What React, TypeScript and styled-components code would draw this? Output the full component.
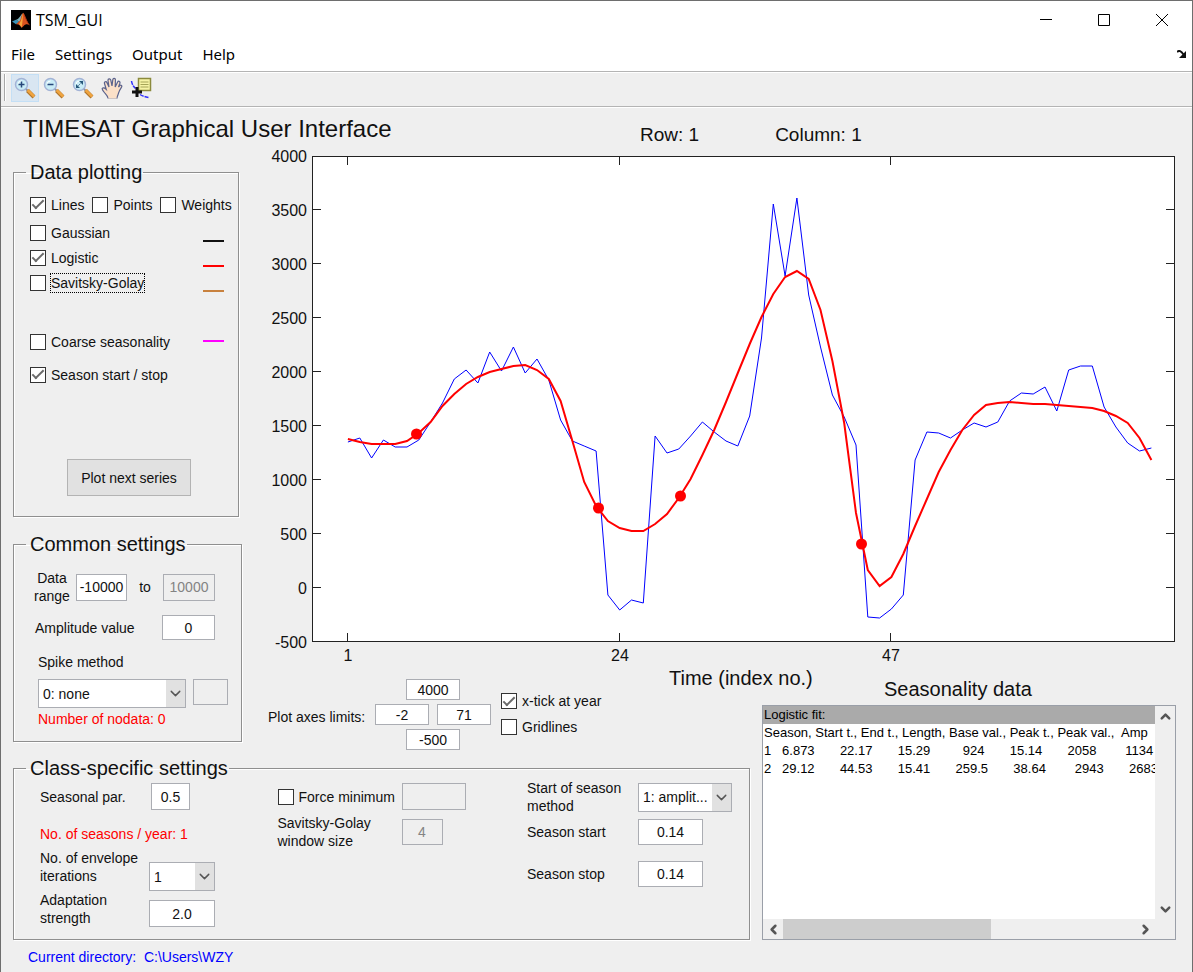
import React, { useId } from "react";
import styled, { createGlobalStyle, css } from "styled-components";
import { ChevronDown, ChevronLeft, ChevronRight, ChevronUp } from "lucide-react";

const GlobalStyle = createGlobalStyle`
  *, *::before, *::after { box-sizing: border-box; }
  body {
    margin: 0;
    background: #efefef;
    color: #111;
    font: 14px/18px "Liberation Sans", Arial, sans-serif;
  }
  button, input, select { font: inherit; color: inherit; margin: 0; }
`;

/* ---------- window chrome ---------- */

const Window = styled.div`
  min-height: 100vh;
  min-width: 1080px;
  display: flex;
  flex-direction: column;
  background: #efefef;
  border: 1px solid #6e6e6e;
  border-bottom: 0;
`;

const TitleBar = styled.header`
  display: flex;
  align-items: center;
  height: 37px;
  padding: 0 1px 0 10px;
  background: #fff;
  color: #000;
  font: 16px/20px "Open Sans", "Noto Sans", sans-serif;
`;

const Caption = styled.span`
  flex: 1;
  padding-left: 5px;
`;

const WindowButton = styled.button`
  width: 58px;
  height: 37px;
  display: grid;
  place-items: center;
  padding: 0;
  border: 0;
  background: none;
`;

const MenuBar = styled.nav`
  display: flex;
  align-items: center;
  gap: 20px;
  height: 33px;
  padding: 0 6px 2px 10px;
  background: #fff;
  color: #000;
  font: 15px/20px "Noto Sans", "Open Sans", sans-serif;
`;

const MenuItem = styled.button`
  padding: 0;
  border: 0;
  background: none;
`;

const DockButton = styled(MenuItem)`
  display: grid;
  margin-left: auto;
`;

const ToolBar = styled.div`
  display: flex;
  align-items: center;
  gap: 1px;
  height: 36px;
  padding: 0 3px 3px;
  border-top: 1px solid #b4b4b4;
  border-bottom: 1px solid #b4b4b4;
  box-shadow: inset 0 1px 0 #fff, 0 1px 0 #fff;
`;

const Grip = styled.span`
  width: 2px;
  height: 27px;
  margin-right: 4px;
  border-left: 1px solid #a8a8a8;
  border-right: 1px solid #fff;
`;

const ToolButton = styled.button<{ $active?: boolean }>`
  display: grid;
  place-items: center;
  width: 28px;
  height: 28px;
  padding: 0;
  border: 1px solid ${(p) => (p.$active ? "#c4dff5" : "transparent")};
  background: ${(p) => (p.$active ? "#d9e6f2" : "none")};
`;

/* ---------- page grid ---------- */

const Heading = styled.div`
  display: flex;
  gap: 76px;
  height: 39px;
  padding: 8px 22px 0;
`;

const MainTitle = styled.h1`
  width: 541px;
  margin: 0;
  font-size: 24px;
  font-weight: 400;
  line-height: 28px;
`;

const Position = styled.p`
  margin: 0;
  font-size: 19px;
  line-height: 40px;
`;

const Workspace = styled.main`
  display: grid;
  grid-template-columns: 249px minmax(400px, 1fr) 100px 414px;
  grid-template-rows: auto 38px auto auto;
  grid-template-areas:
    "side chart chart chart"
    "side limits titles titles"
    "side limits . list"
    "class class class list";
  padding: 0 16px 0 12px;
`;

const Side = styled.div`
  grid-area: side;
  display: flex;
  flex-direction: column;
  align-items: flex-start;
  gap: 15px;
  padding: 14px 0;
`;

const Group = styled.fieldset`
  min-width: 0;
  margin: 0;
  padding: 0 12px 0 16px;
  border: 1px solid #8f8f8f;
  box-shadow: 1px 1px 0 #fff, inset 1px 1px 0 #fff;
`;

const PlottingGroup = styled(Group)`
  width: 226px;
  padding-bottom: 20px;
`;

const CommonGroup = styled(Group)`
  width: 229px;
  padding: 13px 12px 13px 20px;
`;

const ClassGroup = styled(Group)`
  grid-area: class;
  width: 737px;
  padding: 0 16px 12px 26px;
`;

const GroupTitle = styled.legend`
  margin-left: -4px;
  padding: 0 1px 0 4px;
  font-size: 20px;
  line-height: 24px;
`;

const ClassTitle = styled(GroupTitle)`
  margin-left: -14px;
`;

const CommonTitle = styled(GroupTitle)`
  margin-left: -8px;
`;

/* ---------- controls ---------- */

const CheckLabel = styled.label`
  display: inline-flex;
  align-items: center;
  gap: 5px;
  white-space: nowrap;
`;

const Box = styled.input`
  appearance: none;
  display: grid;
  place-items: center;
  width: 16px;
  height: 16px;
  border: 1px solid #333;
  background: #fff;
  &:checked::after {
    content: "";
    width: 12px;
    height: 6px;
    margin-bottom: 3px;
    border-left: 2px solid #6a6a6a;
    border-bottom: 2px solid #6a6a6a;
    transform: rotate(-45deg);
  }
`;

const CheckText = styled.span<{ $focused?: boolean }>`
  ${(p) => p.$focused && css`outline: 1px dotted #000;`}
`;

const Field = styled.input<{ $w: number; $h: number }>`
  width: ${(p) => p.$w}px;
  height: ${(p) => p.$h}px;
  padding: 0;
  border: 1px solid #abadb3;
  background: #fff;
  text-align: center;
  &:disabled {
    background: #efefef;
    color: #838383;
  }
`;

const SelectFrame = styled.span<{ $w: number }>`
  position: relative;
  display: inline-block;
  width: ${(p) => p.$w}px;
  height: 29px;
`;

const SelectBox = styled.select`
  appearance: none;
  width: 100%;
  height: 100%;
  padding: 0 20px 0 4px;
  border: 1px solid #abadb3;
  border-radius: 0;
  background: #fff;
`;

const SelectArrow = styled.span`
  position: absolute;
  top: 1px;
  right: 1px;
  bottom: 1px;
  display: grid;
  place-items: center;
  width: 19px;
  background: #e1e1e1;
  color: #555;
  pointer-events: none;
`;

const PushButton = styled.button`
  display: block;
  width: 124px;
  height: 37px;
  margin: 72px 0 0 37px;
  padding: 0;
  border: 1px solid #b3b3b3;
  background: #e1e1e1;
`;

const Note = styled.p<{ $color: string }>`
  margin: 0;
  color: ${(p) => p.$color};
`;

/* ---------- data plotting ---------- */

const StyleRow = styled.div`
  display: flex;
  gap: 8px;
  height: 25px;
  margin: 8px -4px 3px 0;
`;

const SeriesRow = styled.div<{ $space?: number }>`
  display: flex;
  justify-content: space-between;
  height: 25px;
  margin-top: ${(p) => p.$space ?? 0}px;
  padding-right: 2px;
  ${CheckLabel} { height: 25px; }
`;

const Swatch = styled.span<{ $color: string; $low?: boolean }>`
  width: 21px;
  height: 2px;
  margin-top: ${(p) => (p.$low ? 20 : 11)}px;
  background: ${(p) => p.$color};
`;

/* ---------- common settings ---------- */

const RangeRow = styled.div`
  display: grid;
  grid-template-columns: 36px 57px 1fr 52px;
  align-items: center;
  justify-items: end;
  padding-right: 14px;
`;

const RangeLabel = styled.label`
  width: 36px;
  text-align: center;
`;

const ToLabel = styled.label`
  justify-self: center;
`;

const AmplitudeRow = styled.div`
  display: flex;
  align-items: center;
  justify-content: space-between;
  margin-top: 10px;
  padding: 0 14px 0 1px;
`;

const SpikeBlock = styled.div`
  display: flex;
  flex-direction: column;
  gap: 8px;
  margin-top: 13px;
  padding-left: 4px;
`;

const SpikeRow = styled.div`
  display: flex;
  gap: 7px;
  margin-bottom: -6px;
`;

/* ---------- class settings ---------- */

const ClassColumns = styled.div`
  display: flex;
  justify-content: space-between;
  margin-top: -1px;
`;

const ClassColumn = styled.div<{ $w: number; $top?: number }>`
  width: ${(p) => p.$w}px;
  padding-top: ${(p) => p.$top ?? 0}px;
`;

const ClassRow = styled.div<{ $label: number; $space?: number; $h?: number; $end?: boolean }>`
  display: grid;
  grid-template-columns: ${(p) => p.$label}px 1fr;
  align-items: ${(p) => (p.$end ? "end" : "center")};
  min-height: ${(p) => p.$h ?? 0}px;
  margin-top: ${(p) => p.$space ?? 0}px;
  & > label { align-self: ${(p) => (p.$end ? "start" : "center")}; }
`;

/* ---------- chart and its controls ---------- */

const Chart = styled.svg`
  grid-area: chart;
  display: block;
  width: 100%;
  height: auto;
  font-size: 16px;
  fill: #111;
`;

const Limits = styled.div`
  grid-area: limits;
  display: flex;
  align-items: flex-start;
  padding: 12px 0 0 6px;
`;

const LimitsLabel = styled.span`
  width: 107px;
  line-height: 76px;
`;

const LimitsCross = styled.div`
  display: flex;
  flex-direction: column;
  align-items: center;
  gap: 4px;
`;

const LimitsPair = styled.div`
  display: flex;
  gap: 8px;
`;

const PlotOptions = styled.div`
  display: flex;
  flex-direction: column;
  gap: 8px;
  padding: 13px 0 0 10px;
`;

const Titles = styled.div`
  grid-area: titles;
  display: flex;
  align-items: flex-start;
  padding-left: 7px;
  font-size: 20px;
  line-height: 22px;
  white-space: nowrap;
`;

const AxisTitle = styled.span`
  width: 215px;
`;

const ListTitle = styled.h2`
  margin: 11px 0 0;
  font-size: 20px;
  font-weight: 400;
`;

/* ---------- seasonality list ---------- */

const ListPanel = styled.section`
  grid-area: list;
  display: grid;
  grid-template-columns: 1fr 20px;
  grid-template-rows: 1fr 20px;
  border: 1px solid #9a9fa8;
  background: #efefef;
`;

const List = styled.ul`
  min-width: 0;
  margin: 0;
  padding: 0;
  overflow: hidden;
  background: #fff;
  color: #000;
  list-style: none;
`;

const ListItem = styled.li<{ $selected?: boolean }>`
  padding-left: 1px;
  white-space: pre;
  font-size: 13px;
  background: ${(p) => (p.$selected ? "#aaa" : "none")};
`;

const VerticalBar = styled.div`
  display: flex;
  flex-direction: column;
  justify-content: space-between;
`;

const HorizontalBar = styled.div`
  display: flex;
`;

const Thumb = styled.span`
  flex: 0 0 53%;
  margin-right: auto;
  background: #cdcdcd;
`;

const ScrollButton = styled.button`
  display: grid;
  place-items: center;
  width: 20px;
  height: 20px;
  padding: 0;
  border: 0;
  background: none;
  color: #555;
`;

const Footer = styled.footer`
  padding: 8px 27px 4px;
`;

/* ---------- small components ---------- */

function Check({ label, on, focused }: { label: string; on?: boolean; focused?: boolean }) {
  return (
    <CheckLabel>
      <Box type="checkbox" defaultChecked={on} />
      <CheckText $focused={focused}>{label}</CheckText>
    </CheckLabel>
  );
}

function Select({ id, value, width }: { id: string; value: string; width: number }) {
  return (
    <SelectFrame $w={width}>
      <SelectBox id={id} defaultValue={value}>
        <option>{value}</option>
      </SelectBox>
      <SelectArrow>
        <ChevronDown size={17} strokeWidth={2} />
      </SelectArrow>
    </SelectFrame>
  );
}

function MatlabLogo() {
  return (
    <svg width="20" height="20" viewBox="0 0 20 20" aria-hidden="true">
      <rect width="20" height="20" fill="#000" />
      <path d="M1 11.5 5.5 9.6 8 12 5 14.2z" fill="#3a93b8" />
      <path d="M5.5 9.6C8 9 9.5 5 11.6 3.2L9.6 11 8 12z" fill="#7fb0b8" />
      <path d="M5 14.2 9 10.5C10 8.500 10.600 4 12.200 2.700C14.200 4.500 16 12 19 15.500C17.500 14.600 16 14 14.600 14.500C13 15 12.200 17 10.500 17.800C9.800 16 8 13.800 5 14.2z" fill="#d9531e" />
      <path d="M12.200 2.700C11.600 7 11.800 13 10.500 17.800C9.900 16 9 14.800 8 14.200C10.500 11 11 6 12.200 2.700z" fill="#f6a63a" />
      <path d="M12.600 3.500C14.400 6 16 12.500 19 15.500C16.500 13.800 14.500 9 12.600 3.500z" fill="#8c1d0e" />
    </svg>
  );
}

function Magnifier({ children }: { children: React.ReactNode }) {
  return (
    <svg width="22" height="22" viewBox="0 0 22 22" fill="none" aria-hidden="true">
      <path d="m11.500 11.500 2.500 2.500" stroke="#8d9096" strokeWidth="2" />
      <path d="m13.500 13.500 6.500 6.500" stroke="#b0752b" strokeWidth="4" />
      <path d="m13.600 13 6.500 6.500" stroke="#f0a541" strokeWidth="2.500" />
      <circle cx="7.500" cy="7.500" r="6" fill="#c9ecf6" stroke="#a3b3d6" strokeWidth="1.500" />
      <path d="M4 7.500a3.500 3.500 0 0 1 3.500-3.500" stroke="#fff" />
      {children}
    </svg>
  );
}

function HandIcon() {
  return (
    <svg width="22" height="22" viewBox="0 0 22 22" aria-hidden="true">
      <path
        d="M7 21c-.5-2.500-2.500-4-4-6-1.200-1.500-2.300-2.800-1.700-3.700.8-1 2.500-.3 3.900 1L3.500 6.500C3 4.700 5.200 4 6 5.700L8 10 7 3.500c-.2-2 2.300-2.300 2.800-.3L11 9l.8-6.300c.3-2 2.700-1.700 2.600.3L14.200 10l2.300-4.800c.8-1.700 2.900-.9 2.400 1L17.500 10l1.300-1.500c1.200-1 2.600.2 1.700 1.700-1.500 2.300-2.500 3.800-3 6-.4 2-1.500 3-1.500 4.800z"
        fill="#fbe0c8"
        stroke="#5a628c"
        strokeWidth="1.200"
      />
      <path d="M7.500 20.500h8" stroke="#fbe0c8" strokeWidth="2" />
    </svg>
  );
}

function DataCursorIcon() {
  return (
    <svg width="22" height="22" viewBox="0 0 22 22" fill="none" aria-hidden="true">
      <path d="M8.500 1.500h12v12h-12z" fill="#f6f3a6" stroke="#8b8a3d" strokeWidth="1.500" />
      <path d="M10.500 5h8M10.500 7.500h8M10.500 10h8" stroke="#a5a458" />
      <path d="M1.500 4c.5 3 1.500 5 4 7.500M10 17.500c3 2 6 2.500 9 3" stroke="#2f2fff" strokeWidth="1.500" strokeDasharray="4 1" />
      <path d="M7 10v10M2 15h10" stroke="#111" strokeWidth="3" />
    </svg>
  );
}

/* ---------- chart ---------- */

const PLOT = { left: 312, right: 1175, top: 156, bottom: 642 };
const xOf = (index: number) => 312.500 + (index + 2) * 11.815;
const yOf = (value: number) => 587.600 - value * 0.1078;

// Curve heights on the plot, one entry for each time index from 1 to 69.
const RAW = [
  442, 438, 458, 440, 447, 447, 440, 422, 403, 379, 370, 383, 352, 371, 347, 373, 359, 380, 420, 441, 446, 451, 595,
  610, 600, 603, 436, 453, 449, 436, 422, 432, 441, 446, 416, 338, 204, 276, 198, 295, 347, 395, 417, 445, 617, 618,
  609, 595, 460, 432, 433, 438, 430, 423, 427, 422, 401, 393, 394, 387, 411, 370, 366, 366, 407, 427, 443, 451, 448,
];
const FIT = [
  439, 442, 444, 444, 444, 441, 433, 422, 406, 394, 384, 377, 372, 369, 366, 365, 370, 379, 401, 441, 482, 506, 521,
  528, 531, 531, 524, 514, 498, 479, 455, 430, 402, 373, 344, 317, 294, 277, 271, 279, 310, 361, 423, 513, 570, 586,
  577, 554, 526, 499, 472, 450, 430, 415, 405, 403, 402, 403, 404, 404, 405, 406, 407, 408, 411, 416, 423, 438, 460,
];
const MARKS = [[416, 434], [598, 508], [680, 496], [861, 544]];

const points = (ys: number[]) => ys.map((y, i) => `${xOf(i + 1).toFixed(1)},${y}`).join(" ");

function SeriesChart() {
  const values = [4000, 3500, 3000, 2500, 2000, 1500, 1000, 500, 0, -500];
  return (
    <Chart viewBox="262 146 914 520" role="img" aria-label="Time series with logistic fit">
      <rect
        x={PLOT.left + 0.5}
        y={PLOT.top + 0.5}
        width={PLOT.right - PLOT.left - 1}
        height={PLOT.bottom - PLOT.top - 1}
        fill="#fff"
        stroke="#222"
        shapeRendering="crispEdges"
      />
      {values.map((v) => {
        const y = Math.round(yOf(v));
        const inner = v > -500 && v < 4000;
        return (
          <g key={v}>
            <text x="307" y={y + 6} textAnchor="end">{v}</text>
            {inner && (
              <path
                d={`M${PLOT.left} ${y - 0.5}h9M${PLOT.right} ${y - 0.5}h-9`}
                stroke="#222"
                shapeRendering="crispEdges"
              />
            )}
          </g>
        );
      })}
      {[1, 24, 47].map((t) => {
        const x = Math.round(xOf(t)) - 0.5;
        return (
          <g key={t}>
            <text x={x + 0.5} y="661" textAnchor="middle">{t}</text>
            <path
              d={`M${x} ${PLOT.top}v9M${x} ${PLOT.bottom}v-9`}
              stroke="#222"
              shapeRendering="crispEdges"
            />
          </g>
        );
      })}
      <polyline points={points(RAW)} fill="none" stroke="#00f" />
      <polyline points={points(FIT)} fill="none" stroke="#f00" strokeWidth="2" />
      {MARKS.map(([x, y]) => (
        <circle key={x} cx={x + 0.5} cy={y} r="5.500" fill="#f00" />
      ))}
    </Chart>
  );
}

/* ---------- page ---------- */

export default function App() {
  const id = useId();
  return (
    <>
      <GlobalStyle />
      <Window>
        <TitleBar>
          <MatlabLogo />
          <Caption>TSM_GUI</Caption>
          <WindowButton aria-label="Minimize">
            <svg width="12" height="12" viewBox="0 0 12 12"><path d="M0 5.500h12" stroke="#000" /></svg>
          </WindowButton>
          <WindowButton aria-label="Maximize">
            <svg width="12" height="12" viewBox="0 0 12 12"><path d="M.5.5h11v11H.5z" fill="none" stroke="#000" /></svg>
          </WindowButton>
          <WindowButton aria-label="Close">
            <svg width="12" height="12" viewBox="0 0 12 12"><path d="m0 0 12 12M12 0 0 12" stroke="#000" /></svg>
          </WindowButton>
        </TitleBar>
        <MenuBar>
          <MenuItem>File</MenuItem>
          <MenuItem>Settings</MenuItem>
          <MenuItem>Output</MenuItem>
          <MenuItem>Help</MenuItem>
          <DockButton aria-label="Dock">
            <svg width="9" height="8" viewBox="0 0 9 8">
              <path d="M0 2C2 0 4 1 6.500 4.500" fill="none" stroke="#111" strokeWidth="2" />
              <path d="M9 1v7H2z" fill="#111" />
            </svg>
          </DockButton>
        </MenuBar>
        <ToolBar role="toolbar">
          <Grip />
          <ToolButton $active aria-label="Zoom in">
            <Magnifier><path d="M7.500 4.500v6M4.500 7.500h6" stroke="#26477a" strokeWidth="1.500" /></Magnifier>
          </ToolButton>
          <ToolButton aria-label="Zoom out">
            <Magnifier><path d="M4.500 7.500h6" stroke="#26477a" strokeWidth="1.500" /></Magnifier>
          </ToolButton>
          <ToolButton aria-label="Zoom to fit">
            <Magnifier>
              <path d="M7 4h4v4zM4 7v4h4z" fill="#26577a" />
              <path d="m5.500 9.500 4-4" stroke="#26577a" strokeDasharray="1.500 1" />
            </Magnifier>
          </ToolButton>
          <ToolButton aria-label="Pan"><HandIcon /></ToolButton>
          <ToolButton aria-label="Data cursor"><DataCursorIcon /></ToolButton>
        </ToolBar>

        <Heading>
          <MainTitle>TIMESAT Graphical User Interface</MainTitle>
          <Position>Row: 1</Position>
          <Position>Column: 1</Position>
        </Heading>

        <Workspace>
          <Side>
            <PlottingGroup>
              <GroupTitle>Data plotting</GroupTitle>
              <StyleRow>
                <Check label="Lines" on />
                <Check label="Points" />
                <Check label="Weights" />
              </StyleRow>
              <SeriesRow>
                <Check label="Gaussian" />
                <Swatch $color="#111" $low />
              </SeriesRow>
              <SeriesRow>
                <Check label="Logistic" on />
                <Swatch $color="#f00" $low />
              </SeriesRow>
              <SeriesRow>
                <Check label="Savitsky-Golay" focused />
                <Swatch $color="#c8813e" $low />
              </SeriesRow>
              <SeriesRow $space={34}>
                <Check label="Coarse seasonality" />
                <Swatch $color="#f0f" />
              </SeriesRow>
              <SeriesRow $space={8}>
                <Check label="Season start / stop" on />
              </SeriesRow>
              <PushButton>Plot next series</PushButton>
            </PlottingGroup>

            <CommonGroup>
              <CommonTitle>Common settings</CommonTitle>
              <RangeRow>
                <RangeLabel htmlFor={id + "min"}>Data range</RangeLabel>
                <Field id={id + "min"} $w={51} $h={27} defaultValue="-10000" />
                <ToLabel htmlFor={id + "max"}>to</ToLabel>
                <Field id={id + "max"} $w={52} $h={27} defaultValue="10000" disabled />
              </RangeRow>
              <AmplitudeRow>
                <label htmlFor={id + "amp"}>Amplitude value</label>
                <Field id={id + "amp"} $w={53} $h={25} defaultValue="0" />
              </AmplitudeRow>
              <SpikeBlock>
                <label htmlFor={id + "spike"}>Spike method</label>
                <SpikeRow>
                  <Select id={id + "spike"} value="0: none" width={148} />
                  <Field $w={35} $h={26} disabled aria-label="Spike value" />
                </SpikeRow>
                <Note $color="#f00">Number of nodata: 0</Note>
              </SpikeBlock>
            </CommonGroup>
          </Side>

          <SeriesChart />

          <Limits role="group" aria-label="Plot axes limits">
            <LimitsLabel>Plot axes limits:</LimitsLabel>
            <LimitsCross>
              <Field $w={54} $h={21} defaultValue="4000" aria-label="Y maximum" />
              <LimitsPair>
                <Field $w={54} $h={21} defaultValue="-2" aria-label="X minimum" />
                <Field $w={54} $h={21} defaultValue="71" aria-label="X maximum" />
              </LimitsPair>
              <Field $w={54} $h={21} defaultValue="-500" aria-label="Y minimum" />
            </LimitsCross>
            <PlotOptions>
              <Check label="x-tick at year" on />
              <Check label="Gridlines" />
            </PlotOptions>
          </Limits>

          <Titles>
            <AxisTitle>Time (index no.)</AxisTitle>
            <ListTitle>Seasonality data</ListTitle>
          </Titles>

          <ClassGroup>
            <ClassTitle>Class-specific settings</ClassTitle>
            <ClassColumns>
              <ClassColumn $w={176} $top={4}>
                <ClassRow $label={111}>
                  <label htmlFor={id + "par"}>Seasonal par.</label>
                  <Field id={id + "par"} $w={39} $h={27} defaultValue="0.5" />
                </ClassRow>
                <ClassRow $label={176} $space={15}>
                  <Note $color="#f00">No. of seasons / year: 1</Note>
                </ClassRow>
                <ClassRow $label={109} $space={6} $h={42} $end>
                  <label htmlFor={id + "env"}>No. of envelope iterations</label>
                  <Select id={id + "env"} value="1" width={66} />
                </ClassRow>
                <ClassRow $label={109} $end>
                  <label htmlFor={id + "ada"}>Adaptation strength</label>
                  <Field id={id + "ada"} $w={66} $h={27} defaultValue="2.0" />
                </ClassRow>
              </ClassColumn>

              <ClassColumn $w={188} $top={4}>
                <ClassRow $label={124}>
                  <Check label="Force minimum" />
                  <Field $w={64} $h={27} disabled aria-label="Minimum" />
                </ClassRow>
                <ClassRow $label={124} $space={4}>
                  <label htmlFor={id + "win"}>Savitsky-Golay window size</label>
                  <Field id={id + "win"} $w={41} $h={26} defaultValue="4" disabled />
                </ClassRow>
              </ClassColumn>

              <ClassColumn $w={206}>
                <ClassRow $label={111}>
                  <label htmlFor={id + "som"}>Start of season method</label>
                  <Select id={id + "som"} value="1: amplit..." width={94} />
                </ClassRow>
                <ClassRow $label={111} $space={4}>
                  <label htmlFor={id + "sta"}>Season start</label>
                  <Field id={id + "sta"} $w={65} $h={26} defaultValue="0.14" />
                </ClassRow>
                <ClassRow $label={111} $space={16}>
                  <label htmlFor={id + "sto"}>Season stop</label>
                  <Field id={id + "sto"} $w={65} $h={26} defaultValue="0.14" />
                </ClassRow>
              </ClassColumn>
            </ClassColumns>
          </ClassGroup>

          <ListPanel aria-label="Seasonality data">
            <List role="listbox">
              <ListItem role="option" aria-selected $selected>Logistic fit:</ListItem>
              <ListItem role="option">
                {"Season, Start t., End t., Length, Base val., Peak t., Peak val.,  Amp"}
              </ListItem>
              <ListItem role="option">
                {"1   6.873       22.17       15.29         924       15.14       2058        1134"}
              </ListItem>
              <ListItem role="option">
                {"2   29.12       44.53       15.41       259.5       38.64        2943       2683"}
              </ListItem>
            </List>
            <VerticalBar>
              <ScrollButton aria-label="Scroll up"><ChevronUp size={15} strokeWidth={4} /></ScrollButton>
              <ScrollButton aria-label="Scroll down"><ChevronDown size={15} strokeWidth={4} /></ScrollButton>
            </VerticalBar>
            <HorizontalBar>
              <ScrollButton aria-label="Scroll left"><ChevronLeft size={15} strokeWidth={4} /></ScrollButton>
              <Thumb />
              <ScrollButton aria-label="Scroll right"><ChevronRight size={15} strokeWidth={4} /></ScrollButton>
            </HorizontalBar>
          </ListPanel>
        </Workspace>

        <Footer>
          <Note $color="#00f">Current directory:&nbsp; C:\Users\WZY</Note>
        </Footer>
      </Window>
    </>
  );
}
